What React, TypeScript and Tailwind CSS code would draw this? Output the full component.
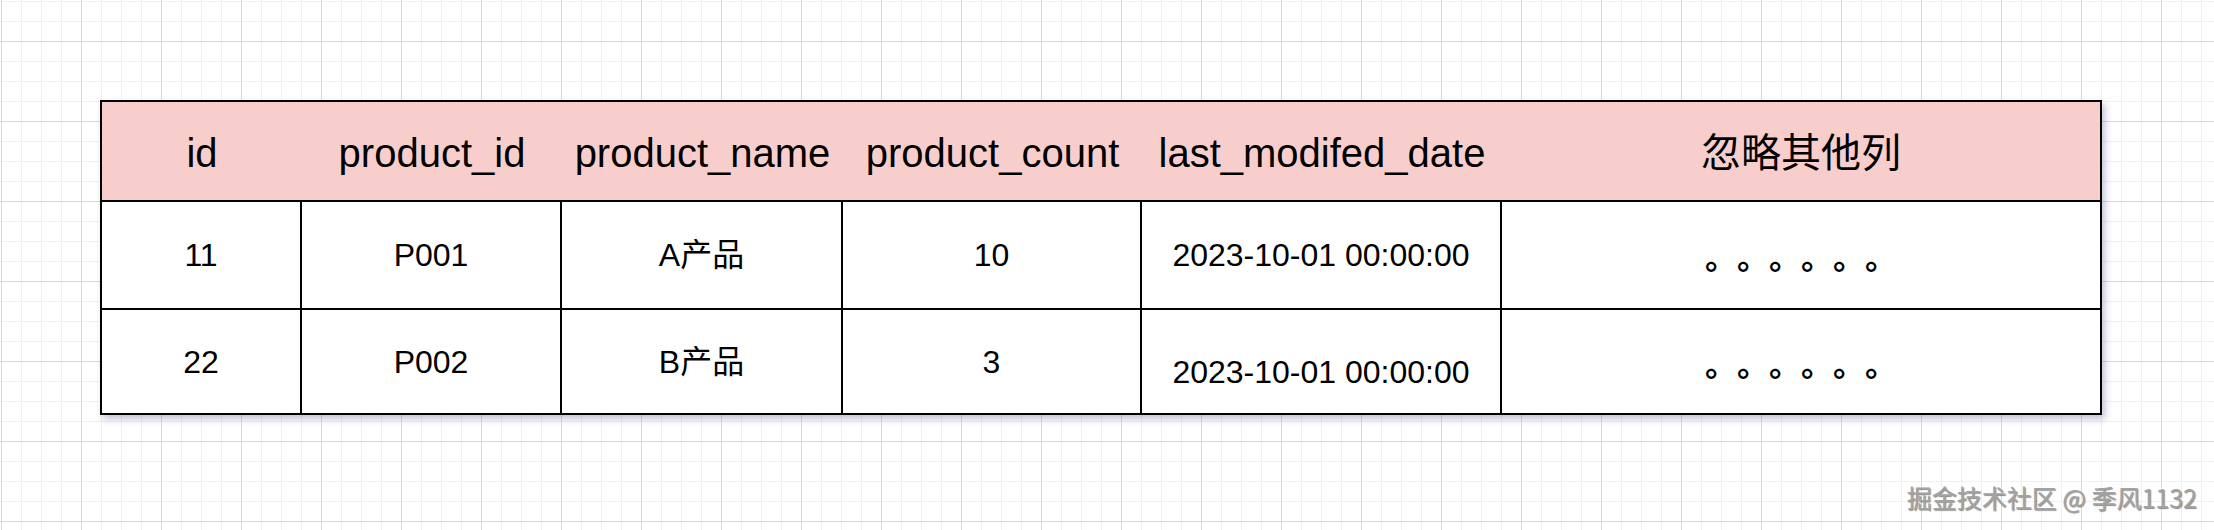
const columns = [
  { key: "id", label: "id", width: "w-[200px]" },
  { key: "product_id", label: "product_id", width: "w-[260px]" },
  { key: "product_name", label: "product_name", width: "w-[281px]" },
  { key: "product_count", label: "product_count", width: "w-[299px]" },
  { key: "last_modifed_date", label: "last_modifed_date", width: "w-[360px]" },
  { key: "other", label: "忽略其他列", width: "flex-1" },
];

const rows = [
  { id: "11", product_id: "P001", product_name: "A产品", product_count: "10", date: "2023-10-01 00:00:00", rowH: "h-[108px] border-b-2 border-black", dateShift: "" },
  { id: "22", product_id: "P002", product_name: "B产品", product_count: "3", date: "2023-10-01 00:00:00", rowH: "h-[103px]", dateShift: "pt-5" },
];

const font = "font-['Liberation_Sans','Noto_Sans_CJK_SC',sans-serif]";

function Cell({ width, children, last, extra = "" }: { width: string; children: React.ReactNode; last?: boolean; extra?: string }) {
  return (
    <div className={`${width} flex h-full items-center justify-center ${last ? "" : "border-r-2 border-black"} ${extra}`}>
      {children}
    </div>
  );
}

function Dots() {
  return (
    <div className="flex font-['Noto_Sans_CJK_SC',sans-serif] text-[32px] font-bold">
      {[0, 1, 2, 3, 4, 5].map((i) => (
        <span key={i} className="w-[32px] text-left">
          。
        </span>
      ))}
    </div>
  );
}

export default function App() {
  return (
    <div
      className={`relative h-[530px] w-[2214px] overflow-hidden bg-white bg-[linear-gradient(to_right,#d9d9d9_1px,transparent_1px),linear-gradient(to_bottom,#d9d9d9_1px,transparent_1px),linear-gradient(to_right,#f0f0f0_1px,transparent_1px),linear-gradient(to_bottom,#f0f0f0_1px,transparent_1px)] bg-[size:80px_80px,80px_80px,20px_20px,20px_20px] bg-[position:1px_0,0_41px,1px_0,0_1px] pl-[100px] pt-[100px] ${font} text-black`}
    >
      <div className="flex h-[315px] w-[2002px] flex-col border-2 border-black bg-white shadow-[3px_4px_7px_rgba(80,80,140,0.35)]">
        <div className="flex h-[100px] shrink-0 border-b-2 border-black bg-[#f8cecc] pt-[3px] text-[40px]">
          {columns.map((c) => (
            <div key={c.key} className={`${c.width} flex items-center justify-center`}>
              {c.label}
            </div>
          ))}
        </div>

        {rows.map((r) => (
          <div key={r.id} className={`flex shrink-0 ${r.rowH} text-[32px]`}>
            <Cell width="w-[200px]">{r.id}</Cell>
            <Cell width="w-[260px]">{r.product_id}</Cell>
            <Cell width="w-[281px]">{r.product_name}</Cell>
            <Cell width="w-[299px]">{r.product_count}</Cell>
            <Cell width="w-[360px]" extra={r.dateShift}>{r.date}</Cell>
            <Cell width="flex-1" last>
              <Dots />
            </Cell>
          </div>
        ))}
      </div>

      <div className="absolute right-[17px] top-[485px] font-['Noto_Sans_CJK_SC','Liberation_Sans',sans-serif] text-[25px] leading-none text-[#a3a3a3] [text-shadow:1px_1px_1px_rgba(0,0,0,0.45),-1px_-1px_0_#ffffff]">
        掘金技术社区 @ 季风1132
      </div>
    </div>
  );
}
